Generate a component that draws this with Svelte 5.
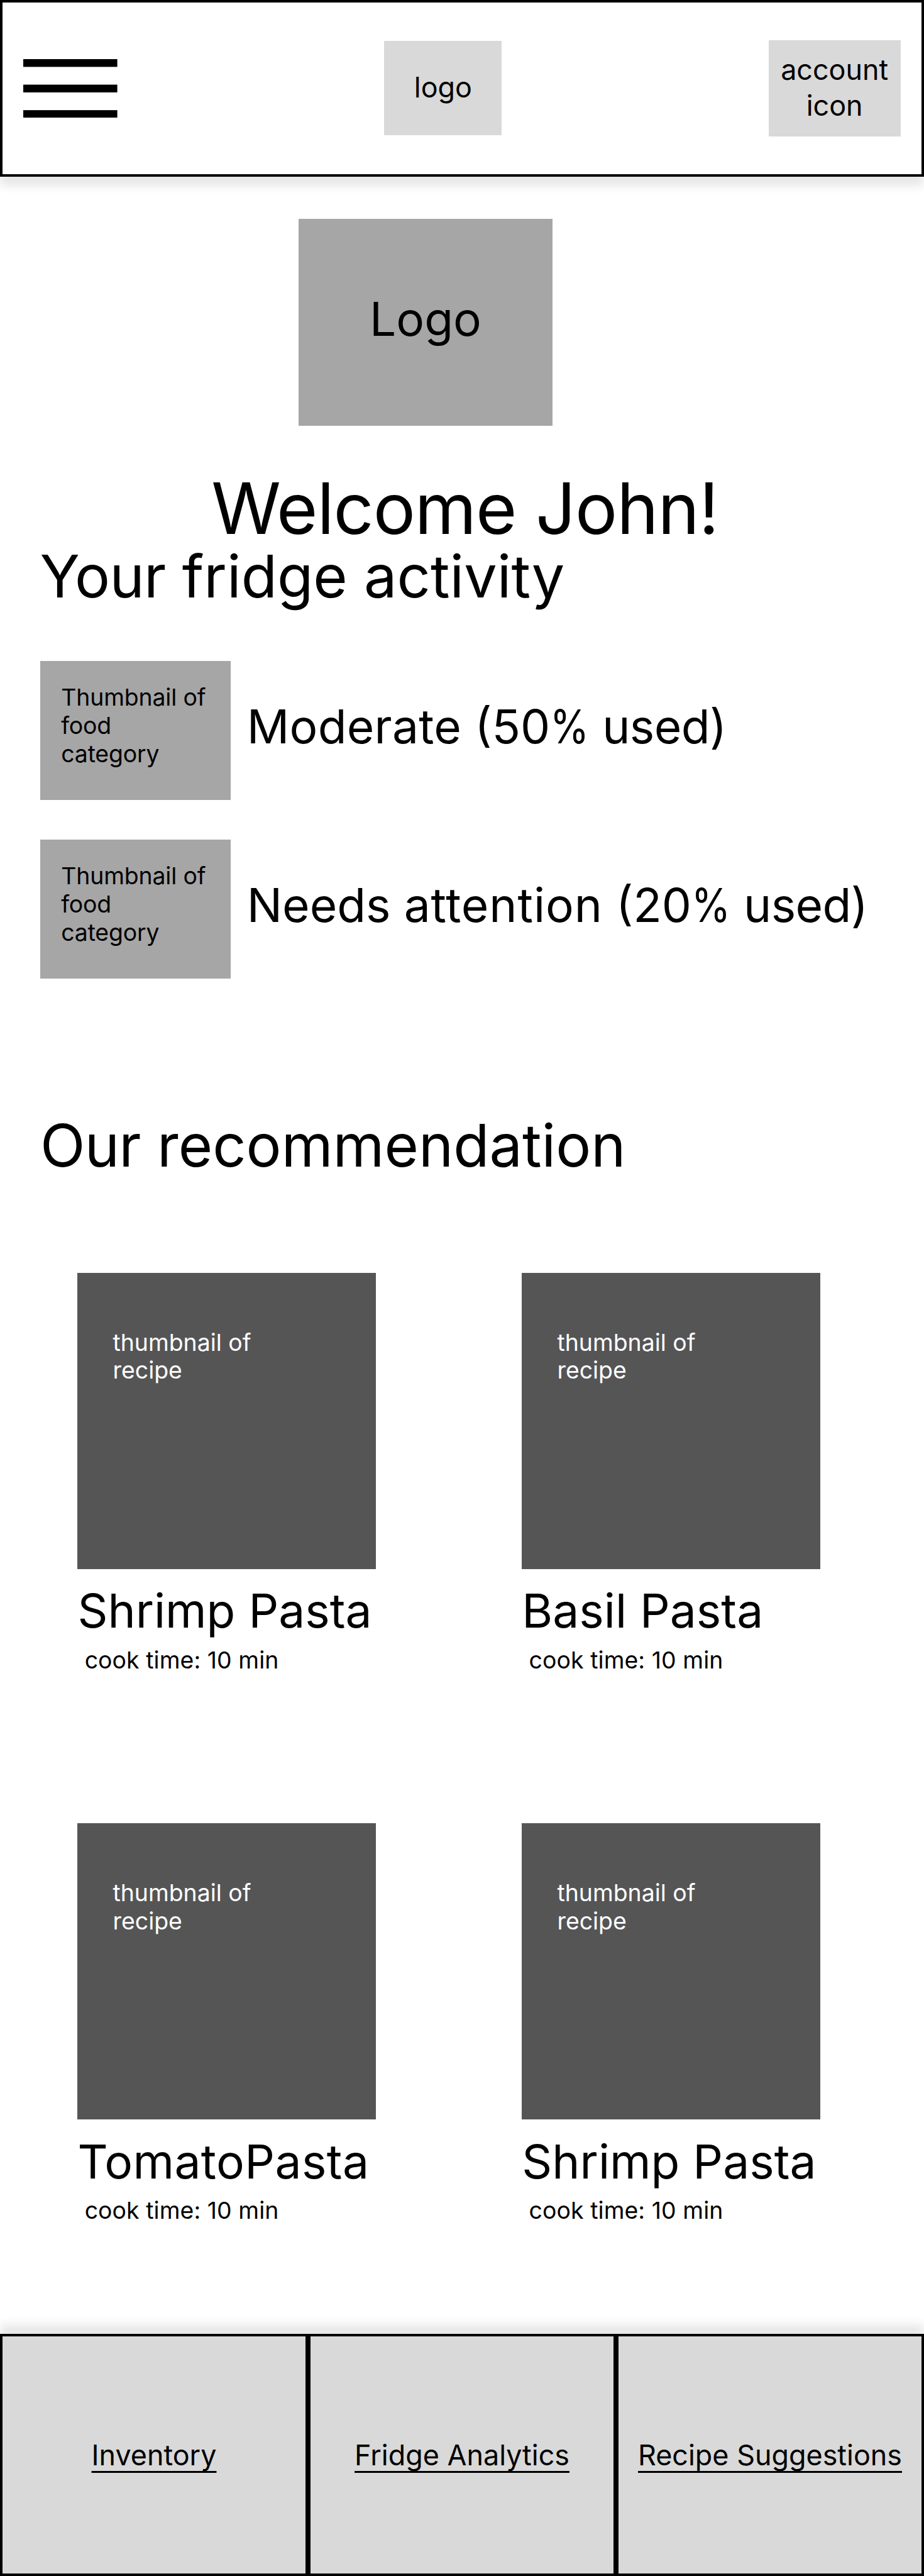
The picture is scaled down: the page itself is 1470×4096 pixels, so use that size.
<script>
  const activity = [
    { thumb: 'Thumbnail of food category', level: 'Moderate', used: 50, fit: 'snug' },
    { thumb: 'Thumbnail of food category', level: 'Needs', rest: 'attention', used: 20 },
  ];
  const recipes = [
    { name: 'Shrimp Pasta', time: 'cook time: 10 min' },
    { name: 'Basil Pasta', time: 'cook time: 10 min' },
    { name: 'TomatoPasta', time: 'cook time: 10 min', fit: 'loose' },
    { name: 'Shrimp Pasta', time: 'cook time: 10 min' },
  ];
  const tabs = ['Inventory', 'Fridge Analytics', 'Recipe Suggestions'];
</script>

<div class="screen">
  <header class="topbar">
    <svg class="menu" viewBox="0 0 40 25" aria-label="Menu">
      <rect width="40" height="3.3" />
      <rect y="10.85" width="40" height="3.3" />
      <rect y="21.7" width="40" height="3.3" />
    </svg>
    <div class="brand">logo</div>
    <div class="account">account<br />icon</div>
  </header>

  <main>
    <div class="hero">Logo</div>
    <h1>Welcome John!</h1>

    <section class="activity">
      <h2><span class="tight">Your</span> fridge activity</h2>
      {#each activity as item}
        <div class="item">
          <div class="food">{item.thumb}</div>
          <p class="status"><span class={item.fit}>{item.level}</span>{#if item.rest}{' '}<span class="wide">{item.rest}</span>{/if} ({item.used}<span class="percent">%</span> <span class="used">used)</span></p>
        </div>
      {/each}
    </section>

    <section class="recommend">
      <h2><span class="tight">Our</span> recommendation</h2>
      <div class="grid">
        {#each recipes as recipe}
          <article>
            <div class="thumb">thumbnail of<br />recipe</div>
            <h3 class={recipe.fit}>{recipe.name}</h3>
            <p class="time">{recipe.time}</p>
          </article>
        {/each}
      </div>
    </section>
  </main>

  <nav class="tabs">
    {#each tabs as tab}
      <div class="tab"><span>{tab}</span></div>
    {/each}
  </nav>
</div>

<style>
  /* 1rem is one unit of the 393 x 1095 phone layout */
  :global(html) {
    font-size: 3.7405px;
  }
  :global(body) {
    margin: 0;
    background: #fff;
  }
  h1, h2, h3, p {
    margin: 0;
    font-weight: 400;
  }
  .screen {
    box-sizing: border-box;
    display: flex;
    flex-direction: column;
    width: 1470px;
    height: 4096px;
    overflow: hidden;
    font-family: Inter, sans-serif;
    color: #000;
    background: #fff;
  }
  .topbar {
    box-sizing: border-box;
    flex: none;
    display: flex;
    align-items: center;
    justify-content: space-between;
    height: 75rem;
    padding: 0 calc(10rem - 4px);
    border: 4px solid #000;
    box-shadow: 0 4rem 4rem rgba(0, 0, 0, 0.1);
  }
  .menu {
    width: 40rem;
    height: 25rem;
  }
  .brand,
  .account {
    box-sizing: border-box;
    display: flex;
    align-items: center;
    justify-content: center;
    padding-bottom: 0.4rem;
    font-size: 12rem;
    line-height: 15rem;
    text-align: center;
    background: #d9d9d9;
  }
  .brand {
    width: 50rem;
    height: 40rem;
  }
  .account {
    width: 56.1rem;
    height: 41rem;
  }
  main {
    flex: 1;
    min-height: 0;
    display: flex;
    flex-direction: column;
    padding-top: 18rem;
  }
  .hero {
    box-sizing: border-box;
    flex: none;
    display: flex;
    align-items: center;
    justify-content: center;
    width: 108rem;
    height: 88rem;
    margin-left: 127rem;
    padding-bottom: 2.3rem;
    font-size: 20rem;
    line-height: 24rem;
    background: #a6a6a6;
  }
  h1 {
    height: 36rem;
    margin-top: 17rem;
    padding-left: 89.9rem;
    font-size: 30rem;
    line-height: 36rem;
    letter-spacing: -0.28rem;
    white-space: nowrap;
  }
  h2 {
    font-size: 25rem;
    line-height: 30rem;
  }
  .tight {
    letter-spacing: -0.2rem;
  }
  .snug {
    letter-spacing: 0.07rem;
  }
  .loose {
    letter-spacing: 0.11rem;
  }
  .wide {
    letter-spacing: 0.25rem;
  }
  .activity {
    display: flex;
    flex-direction: column;
    padding-left: 17rem;
    margin-top: -4rem;
  }
  .item {
    display: flex;
    align-items: center;
    height: 59rem;
    margin-top: 17rem;
  }
  h2 + .item {
    margin-top: 21rem;
  }
  .food {
    box-sizing: border-box;
    flex: none;
    width: 81rem;
    height: 59rem;
    padding: 9.65rem 8rem 0 9rem;
    font-size: 10rem;
    line-height: 12rem;
    letter-spacing: -0.04rem;
    background: #a6a6a6;
  }
  .status {
    margin-left: 7rem;
    font-size: 20rem;
    line-height: 24rem;
    white-space: nowrap;
    padding-bottom: 3.2rem;
  }
  .percent {
    display: inline-block;
    margin-right: -3.05rem;
    transform: scaleX(0.845);
    transform-origin: 0 50%;
  }
  .used {
    letter-spacing: -0.16rem;
  }
  .recommend {
    margin-top: 56rem;
  }
  .recommend h2 {
    padding-left: 17.1rem;
  }
  .grid {
    display: grid;
    grid-template-columns: 127rem 127rem;
    grid-auto-rows: 234rem;
    column-gap: 62rem;
    padding: 39rem 0 0 33rem;
  }
  .thumb {
    box-sizing: border-box;
    height: 126rem;
    padding: 23.8rem 15rem 0;
    font-size: 10rem;
    line-height: 12rem;
    color: #fff;
    background: #555;
  }
  h3 {
    margin-top: 6rem;
    font-size: 20rem;
    line-height: 24rem;
    white-space: nowrap;
  }
  .time {
    margin-top: 2.8rem;
    padding-left: 3rem;
    font-size: 10rem;
    line-height: 12rem;
    letter-spacing: 0.02rem;
  }
  .tabs {
    flex: none;
    display: grid;
    grid-template-columns: repeat(3, 1fr);
    height: 103rem;
    box-shadow: 0 -4rem 4rem rgba(0, 0, 0, 0.1);
  }
  .tab {
    box-sizing: border-box;
    display: flex;
    align-items: center;
    justify-content: center;
    padding-top: 0.6rem;
    border: 4px solid #000;
    background: #d9d9d9;
    font-size: 12rem;
    line-height: 15rem;
    white-space: nowrap;
    text-decoration: underline;
    text-decoration-thickness: 3px;
    text-underline-offset: 2.3rem;
    text-decoration-skip-ink: none;
  }
</style>
